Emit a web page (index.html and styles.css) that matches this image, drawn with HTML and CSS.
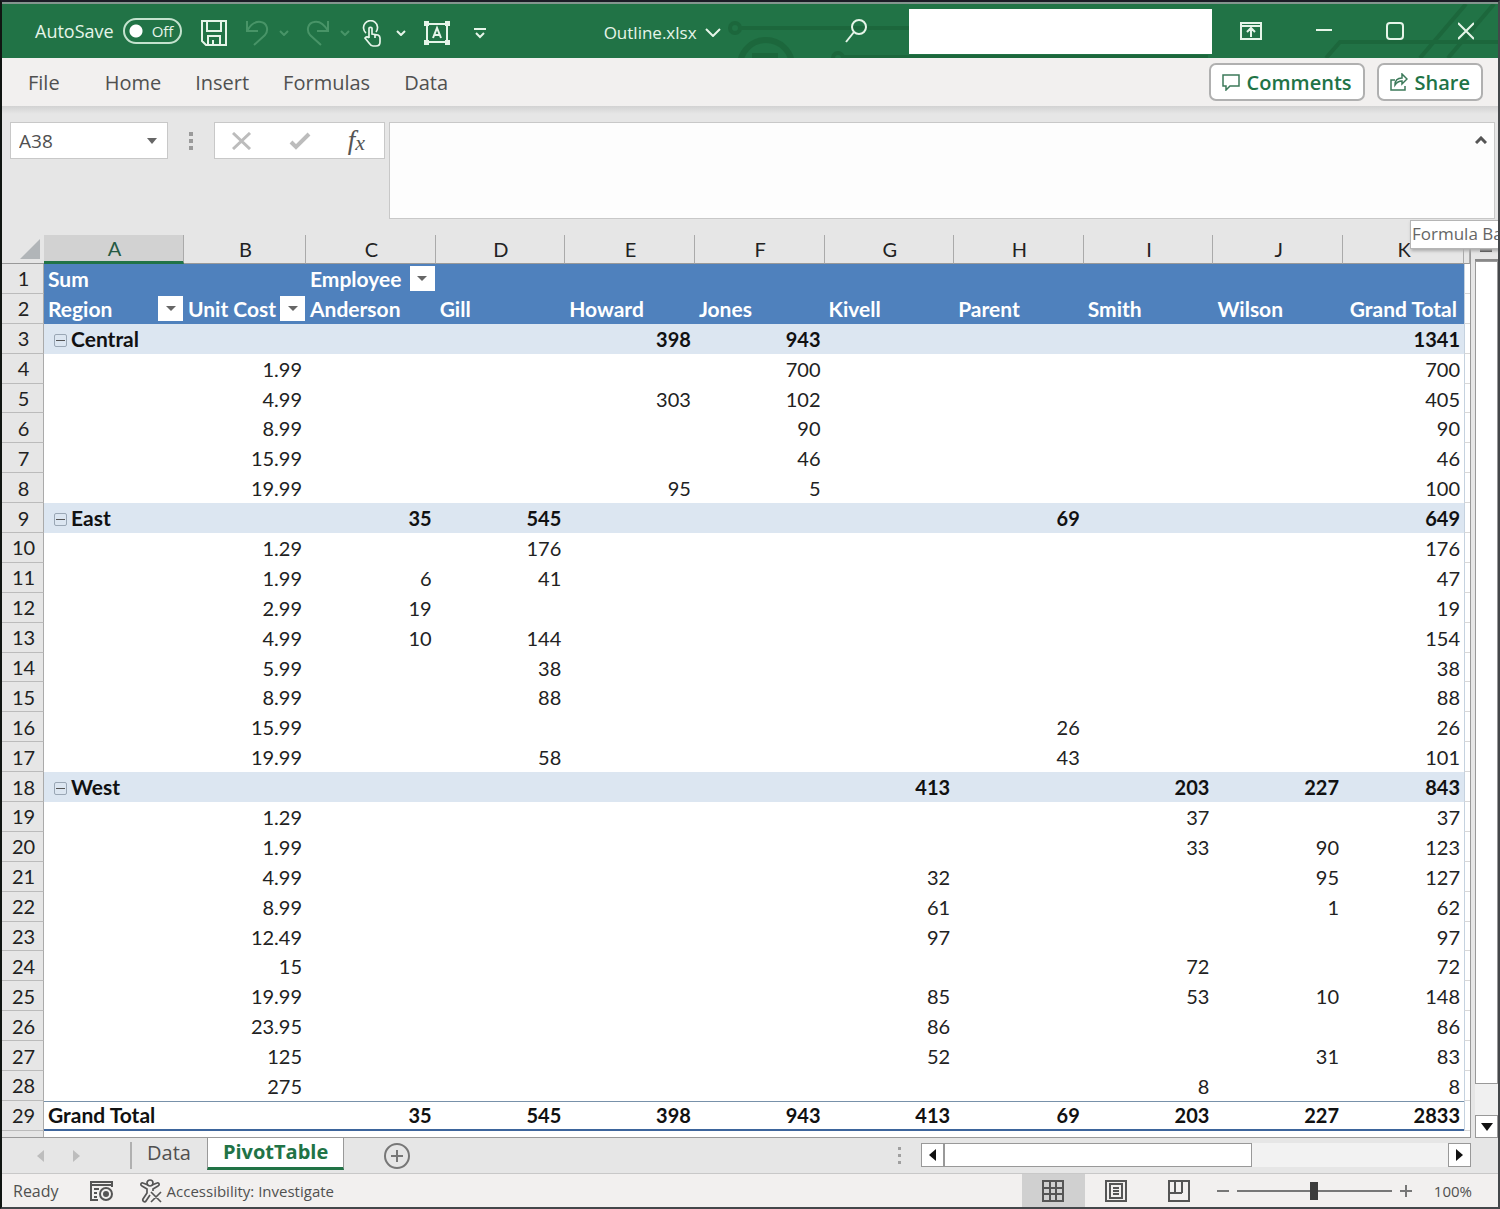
FILE: index.html
```html
<!DOCTYPE html>
<html lang="en">
<head>
<meta charset="utf-8">
<title>Outline.xlsx</title>
<link rel="stylesheet" href="styles.css">
</head>
<body>
<div class="window">
  <header class="titlebar">
    <svg class="circuit" width="770" height="54" viewBox="0 0 770 54" fill="none" stroke="#1b6238" stroke-width="4" aria-hidden="true">
      <circle cx="7" cy="24" r="5"/><path d="M13 24H480"/><circle cx="38" cy="62" r="26" stroke-width="6"/><path d="M24 52h26" stroke-width="6"/>
      <circle cx="110" cy="54" r="5"/><path d="M116 53H480M598 54l14-16h158M692 54l46-54M720 54l46-54"/>
    </svg>
    <label class="autosave">AutoSave
      <span class="switch"><input type="checkbox" role="switch"><span>Off</span></span>
    </label>
    <div class="quick">
      <button aria-label="Save"><svg width="26" height="26" viewBox="0 0 26 26" fill="none" stroke="#e6f5e9" stroke-width="2"><path d="M1 1h24v24H5l-4-4zM6 1v10h14V1M7 25v-9h12v9M12 25v-5"/></svg></button>
      <span class="pair faded">
        <button aria-label="Undo"><svg width="24" height="26" viewBox="0 0 24 26" fill="none" stroke="#5da67a" stroke-width="2"><path d="M2 1v10h11M2 11C6 4 11 1 16 2c6 1 8 8 4 13L9 25"/></svg></button>
        <button aria-label="Undo list"><svg width="10" height="6" viewBox="0 0 10 6" fill="none" stroke="#5da67a" stroke-width="2"><path d="M1 1l4 4 4-4"/></svg></button>
      </span>
      <span class="pair faded">
        <button aria-label="Redo"><svg width="24" height="26" viewBox="0 0 24 26" fill="none" stroke="#5da67a" stroke-width="2"><path d="M22 1v10H11M22 11C18 4 13 1 8 2c-6 1-8 8-4 13l11 10"/></svg></button>
        <button aria-label="Redo list"><svg width="10" height="6" viewBox="0 0 10 6" fill="none" stroke="#5da67a" stroke-width="2"><path d="M1 1l4 4 4-4"/></svg></button>
      </span>
      <span class="pair touch">
        <button aria-label="Touch mode"><svg width="20" height="27" viewBox="0 0 20 27" fill="none" stroke="#e6f5e9" stroke-width="2"><path d="M4 13a7 7 0 1 1 10-1" stroke-width="1.7"/><path d="M7 18V8a2 2 0 0 1 3 0v6l6 1q2 1 2 3v4q0 4-4 4h-3q-2 0-4-3l-4-5q2-2 4 0M13 14v4" stroke-width="1.7"/></svg></button>
        <button aria-label="Touch mode list"><svg width="10" height="6" viewBox="0 0 10 6" fill="none" stroke="#e6f5e9" stroke-width="2"><path d="M1 1l4 4 4-4"/></svg></button>
      </span>
      <button aria-label="Text box"><svg width="26" height="24" viewBox="0 0 26 24" fill="none" stroke="#e6f5e9" stroke-width="2"><path d="M3 3h20v18H3z"/><path d="M0 0h5v5H0zM21 0h5v5h-5zM0 19h5v5H0zM21 19h5v5h-5z" fill="#e6f5e9" stroke="none"/><path d="M9 17l4-10 4 10M10 14h6"/></svg></button>
      <button aria-label="Customize toolbar"><svg width="12" height="11" viewBox="0 0 12 11" fill="none" stroke="#e6f5e9" stroke-width="2"><path d="M0 1h12M2 5l4 4 4-4"/></svg></button>
    </div>
    <button class="file-name">Outline.xlsx <svg width="16" height="9" viewBox="0 0 16 9" fill="none" stroke="#e6f5e9" stroke-width="2"><path d="M1 1l7 7 7-7"/></svg></button>
    <button class="search" aria-label="Search"><svg width="22" height="24" viewBox="0 0 22 24" fill="none" stroke="#e6f5e9" stroke-width="2"><circle cx="14" cy="8" r="7"/><path d="M9 13L1 23"/></svg></button>
    <div class="account"></div>
    <div class="controls">
      <button aria-label="Ribbon options"><svg width="22" height="18" viewBox="0 0 22 18" fill="none" stroke="#e6f5e9" stroke-width="2"><path d="M1 1h20v16H1zM1 4h20M11 15V7M7 10l4-4 4 4"/></svg></button>
      <button aria-label="Minimize"><svg width="16" height="18" viewBox="0 0 16 18" stroke="#e6f5e9" stroke-width="2"><path d="M0 8h16"/></svg></button>
      <button aria-label="Maximize"><svg width="18" height="18" viewBox="0 0 18 18" fill="none" stroke="#e6f5e9" stroke-width="2"><rect x="1" y="1" width="16" height="16" rx="3"/></svg></button>
      <button aria-label="Close"><svg width="16" height="18" viewBox="0 0 16 18" stroke="#e6f5e9" stroke-width="2"><path d="M0 1l16 16M16 1L0 17"/></svg></button>
    </div>
  </header>

  <nav class="ribbon">
    <a href="#file">File</a><a href="#home">Home</a><a href="#insert">Insert</a><a href="#formulas">Formulas</a><a href="#data">Data</a>
    <button class="comments"><svg width="18" height="17" viewBox="0 0 18 17" fill="none" stroke="#3c7a5a" stroke-width="1.5"><path d="M1 1h16v11H8l-4 4v-4H1z"/></svg>Comments</button>
    <button><svg width="18" height="18" viewBox="0 0 18 18" fill="none" stroke="#3c7a5a" stroke-width="1.5"><path d="M5 7H1v10h14v-4M5 12c0-5 3-7 7-7V1l5 5-5 5V8c-3 0-5 1-7 4z"/></svg>Share</button>
  </nav>

  <section class="formula-area">
    <div class="name-box"><input type="text" value="A38" aria-label="Name box"><button aria-label="Names"><svg width="10" height="6"><path d="M0 0h10L5 6z" fill="#666"/></svg></button></div>
    <svg class="grip" width="4" height="18" fill="#9a9a9a"><path d="M0 0h4v4H0zM0 7h4v4H0zM0 14h4v4H0z"/></svg>
    <div class="fx-box">
      <button aria-label="Cancel"><svg width="20" height="18" viewBox="0 0 20 18" stroke="#bcbcbc" stroke-width="3"><path d="M1 1l17 16M18 1L1 17"/></svg></button>
      <button aria-label="Enter"><svg width="22" height="18" viewBox="0 0 22 18" fill="none" stroke="#bcbcbc" stroke-width="4"><path d="M2 10l5 5L20 2"/></svg></button>
      <button class="fx" aria-label="Insert function">f<small>x</small></button>
    </div>
    <div class="formula"><textarea aria-label="Formula bar"></textarea><button aria-label="Collapse formula bar"><svg width="12" height="8" viewBox="0 0 12 8" fill="none" stroke="#555" stroke-width="3"><path d="M1 7l5-5 5 5"/></svg></button>
      <div class="tooltip" role="tooltip">Formula Bar</div>
    </div>
  </section>

  <main class="workspace">
    <div class="sheet">
    <table>
      <colgroup><col class="c-row"><col class="c-a"><col class="c-b"><col><col><col><col><col><col><col><col><col class="c-k"><col class="c-rest"></colgroup>
      <thead><tr><th><svg class="corner" width="20" height="20"><path d="M20 0v20H0z" fill="#b1b5b8"/></svg></th><th class="selected">A</th><th>B</th><th>C</th><th>D</th><th>E</th><th>F</th><th>G</th><th>H</th><th>I</th><th>J</th><th>K</th><th></th></tr></thead>
      <tbody>
      <tr class="head"><th>1</th><td>Sum</td><td></td><td><span class="field">Employee<button aria-label="Filter Employee"></button></span></td><td></td><td></td><td></td><td></td><td></td><td></td><td></td><td></td><td></td></tr>
      <tr class="head"><th>2</th><td><span class="field">Region<button aria-label="Filter Region"></button></span></td><td><span class="field">Unit Cost<button aria-label="Filter Unit Cost"></button></span></td><td>Anderson</td><td>Gill</td><td>Howard</td><td>Jones</td><td>Kivell</td><td>Parent</td><td>Smith</td><td>Wilson</td><td>Grand Total</td><td></td></tr>
      <tr class="group"><th>3</th><td><button class="toggle" aria-label="Collapse"></button>Central</td><td></td><td></td><td></td><td>398</td><td>943</td><td></td><td></td><td></td><td></td><td>1341</td><td></td></tr>
      <tr><th>4</th><td></td><td>1.99</td><td></td><td></td><td></td><td>700</td><td></td><td></td><td></td><td></td><td>700</td><td></td></tr>
      <tr><th>5</th><td></td><td>4.99</td><td></td><td></td><td>303</td><td>102</td><td></td><td></td><td></td><td></td><td>405</td><td></td></tr>
      <tr><th>6</th><td></td><td>8.99</td><td></td><td></td><td></td><td>90</td><td></td><td></td><td></td><td></td><td>90</td><td></td></tr>
      <tr><th>7</th><td></td><td>15.99</td><td></td><td></td><td></td><td>46</td><td></td><td></td><td></td><td></td><td>46</td><td></td></tr>
      <tr><th>8</th><td></td><td>19.99</td><td></td><td></td><td>95</td><td>5</td><td></td><td></td><td></td><td></td><td>100</td><td></td></tr>
      <tr class="group"><th>9</th><td><button class="toggle" aria-label="Collapse"></button>East</td><td></td><td>35</td><td>545</td><td></td><td></td><td></td><td>69</td><td></td><td></td><td>649</td><td></td></tr>
      <tr><th>10</th><td></td><td>1.29</td><td></td><td>176</td><td></td><td></td><td></td><td></td><td></td><td></td><td>176</td><td></td></tr>
      <tr><th>11</th><td></td><td>1.99</td><td>6</td><td>41</td><td></td><td></td><td></td><td></td><td></td><td></td><td>47</td><td></td></tr>
      <tr><th>12</th><td></td><td>2.99</td><td>19</td><td></td><td></td><td></td><td></td><td></td><td></td><td></td><td>19</td><td></td></tr>
      <tr><th>13</th><td></td><td>4.99</td><td>10</td><td>144</td><td></td><td></td><td></td><td></td><td></td><td></td><td>154</td><td></td></tr>
      <tr><th>14</th><td></td><td>5.99</td><td></td><td>38</td><td></td><td></td><td></td><td></td><td></td><td></td><td>38</td><td></td></tr>
      <tr><th>15</th><td></td><td>8.99</td><td></td><td>88</td><td></td><td></td><td></td><td></td><td></td><td></td><td>88</td><td></td></tr>
      <tr><th>16</th><td></td><td>15.99</td><td></td><td></td><td></td><td></td><td></td><td>26</td><td></td><td></td><td>26</td><td></td></tr>
      <tr><th>17</th><td></td><td>19.99</td><td></td><td>58</td><td></td><td></td><td></td><td>43</td><td></td><td></td><td>101</td><td></td></tr>
      <tr class="group"><th>18</th><td><button class="toggle" aria-label="Collapse"></button>West</td><td></td><td></td><td></td><td></td><td></td><td>413</td><td></td><td>203</td><td>227</td><td>843</td><td></td></tr>
      <tr><th>19</th><td></td><td>1.29</td><td></td><td></td><td></td><td></td><td></td><td></td><td>37</td><td></td><td>37</td><td></td></tr>
      <tr><th>20</th><td></td><td>1.99</td><td></td><td></td><td></td><td></td><td></td><td></td><td>33</td><td>90</td><td>123</td><td></td></tr>
      <tr><th>21</th><td></td><td>4.99</td><td></td><td></td><td></td><td></td><td>32</td><td></td><td></td><td>95</td><td>127</td><td></td></tr>
      <tr><th>22</th><td></td><td>8.99</td><td></td><td></td><td></td><td></td><td>61</td><td></td><td></td><td>1</td><td>62</td><td></td></tr>
      <tr><th>23</th><td></td><td>12.49</td><td></td><td></td><td></td><td></td><td>97</td><td></td><td></td><td></td><td>97</td><td></td></tr>
      <tr><th>24</th><td></td><td>15</td><td></td><td></td><td></td><td></td><td></td><td></td><td>72</td><td></td><td>72</td><td></td></tr>
      <tr><th>25</th><td></td><td>19.99</td><td></td><td></td><td></td><td></td><td>85</td><td></td><td>53</td><td>10</td><td>148</td><td></td></tr>
      <tr><th>26</th><td></td><td>23.95</td><td></td><td></td><td></td><td></td><td>86</td><td></td><td></td><td></td><td>86</td><td></td></tr>
      <tr><th>27</th><td></td><td>125</td><td></td><td></td><td></td><td></td><td>52</td><td></td><td></td><td>31</td><td>83</td><td></td></tr>
      <tr><th>28</th><td></td><td>275</td><td></td><td></td><td></td><td></td><td></td><td></td><td>8</td><td></td><td>8</td><td></td></tr>
      <tr class="total"><th>29</th><td>Grand Total</td><td></td><td>35</td><td>545</td><td>398</td><td>943</td><td>413</td><td>69</td><td>203</td><td>227</td><td>2833</td><td></td></tr>
      </tbody>
    </table>
    </div>
    <div class="vscroll"><div class="vsplit"></div><div class="vthumb"></div><button aria-label="Scroll down"><svg width="12" height="8"><path d="M0 0h12L6 8z" fill="#111"/></svg></button></div>
  </main>

  <section class="tabs">
    <div class="arrows"><button aria-label="Previous sheet"><svg width="7" height="12"><path d="M7 0v12L0 6z" fill="#bdbdbd"/></svg></button><button aria-label="Next sheet"><svg width="7" height="12"><path d="M0 0v12l7-6z" fill="#bdbdbd"/></svg></button></div>
    <button class="tab">Data</button>
    <button class="tab active">PivotTable</button>
    <button class="add" aria-label="New sheet"><svg width="26" height="26" viewBox="0 0 26 26" fill="none" stroke="#777" stroke-width="2"><circle cx="13" cy="13" r="12"/><path d="M13 7v12M7 13h12"/></svg></button>
    <svg class="grip" width="4" height="18" fill="#a0a0a0"><path d="M0 0h3v3H0zM0 7h3v3H0zM0 14h3v3H0z"/></svg>
    <div class="hscroll"><button aria-label="Scroll left"><svg width="7" height="12"><path d="M7 0v12L0 6z" fill="#111"/></svg></button><div class="hthumb"></div><button class="right" aria-label="Scroll right"><svg width="7" height="12"><path d="M0 0v12l7-6z" fill="#111"/></svg></button></div>
  </section>

  <footer class="status">
    <span class="ready">Ready</span>
    <button class="macro" aria-label="Record macro"><svg width="24" height="22" viewBox="0 0 24 22" fill="none" stroke="#555" stroke-width="2"><path d="M8 20H1V2h21v5M1 5h21M4 9h5M4 13h3M4 17h3"/><circle cx="16" cy="14" r="6"/><circle cx="16" cy="14" r="2" fill="#555"/></svg></button>
    <button class="access"><svg width="22" height="24" viewBox="0 0 22 24" fill="none" stroke="#555" stroke-width="1.7"><circle cx="10" cy="4" r="3"/><path d="M8 6L3 4C1 3 0 6 2 7l5 3v4l-4 6c-1 2 2 4 3 2l4-6M12 6l5-2c2-1 3 2 1 3l-5 3v2M11 13l10 10M21 13L11 23"/></svg>Accessibility: Investigate</button>
    <div class="views">
      <button class="on" aria-label="Normal view"><svg width="22" height="22" viewBox="0 0 22 22" fill="none" stroke="#555" stroke-width="2"><path d="M1 1h20v20H1zM8 1v20M14 1v20M1 8h20M1 14h20"/></svg></button>
      <button aria-label="Page layout"><svg width="22" height="22" viewBox="0 0 22 22" fill="none" stroke="#555" stroke-width="2"><path d="M1 1h20v20H1zM5 4h12v14H5zM8 8h6M8 11h6M8 14h6"/></svg></button>
      <button aria-label="Page break preview"><svg width="22" height="22" viewBox="0 0 22 22" fill="none" stroke="#555" stroke-width="2"><path d="M1 1h20v20H1zM7 1v12M14 1v12M1 13h13"/></svg></button>
    </div>
    <div class="zoom">
      <button aria-label="Zoom out"><svg width="12" height="12" stroke="#777" stroke-width="2"><path d="M0 6h12"/></svg></button>
      <input type="range" min="0" max="200" value="100" aria-label="Zoom">
      <button aria-label="Zoom in"><svg width="12" height="12" stroke="#777" stroke-width="2"><path d="M0 6h12M6 0v12"/></svg></button>
      <span class="percent">100%</span>
    </div>
  </footer>
</div>
</body>
</html>
```
FILE: styles.css
```css
* { box-sizing: border-box; }
body { margin: 0; font-family: "Open Sans", "Noto Sans", sans-serif; color: #505050; }
button { padding: 0; border: 0; background: none; font: inherit; color: inherit; display: inline-flex; align-items: center; justify-content: center; }
svg { display: block; flex: none; }
.window { height: 100vh; min-height: 1120px; display: flex; flex-direction: column; overflow: hidden; background: #e6e6e6; border: 2px solid #44474a; border-top-color: #1b1b25; border-left-color: #101512; }

.titlebar { position: relative; height: 56px; flex: none; display: flex; align-items: center; background: #217346; border-top: 2px solid #84958f; color: #e6f5e9; padding: 0 24px 0 33px; }
.titlebar > * { position: relative; }
.titlebar > .circuit { position: absolute; right: 0; top: 0; opacity: .7; }
.autosave { display: flex; align-items: center; gap: 9px; font-size: 18px; }
.switch { display: grid; width: 59px; height: 26px; align-items: center; }
.switch > * { grid-area: 1 / 1; }
.switch input { appearance: none; margin: 0; width: 100%; height: 100%; border: 2px solid #c4e2ce; border-radius: 13px; background: radial-gradient(circle at 11px 11px, #fff 6px, transparent 7px); }
.switch span { padding-left: 29px; font-size: 15px; }
.quick { display: flex; align-items: center; gap: 18px; margin-left: 19px; padding-top: 4px; }
.pair { display: flex; align-items: center; gap: 10px; }
.faded + .faded { margin-left: -1px; }
.touch { gap: 14px; margin-left: -6px; }
.quick > :last-child { margin-left: 6px; }
.faded { opacity: .65; }
.file-name { margin-left: 118px; padding-top: 2px; gap: 8px; font-size: 17px; }
.search { margin-left: 124px; }
.account { flex: 0 1 303px; height: 45px; margin-left: 42px; background: #fff; }
.controls { margin-left: auto; display: flex; gap: 54px; }

.ribbon { flex: none; height: 48px; display: flex; align-items: center; gap: 34px; padding: 0 15px 0 26px; background: #f2f0ef; }
.ribbon a { color: #505050; text-decoration: none; font-size: 20px; }
.ribbon a:first-child { margin-right: 11px; }
.ribbon button { height: 38px; padding: 0 11px; gap: 7px; border: 2px solid #b0b0b0; border-radius: 7px; background: #fff; color: #217346; font-size: 20px; font-weight: 600; margin-left: -22px; }
.ribbon .comments { margin-left: auto; }

.formula-area { flex: none; height: 129px; display: flex; align-items: flex-start; padding: 16px 3px 0 8px; background: linear-gradient(#d2d2d2, #e6e6e6 8px); }
.name-box { display: flex; width: 158px; height: 37px; border: 1px solid #c8c8c8; background: #fff; padding-right: 10px; }
.name-box input { flex: 1; min-width: 0; border: 0; padding: 0 8px; font: 19px "Open Sans", sans-serif; color: #505050; background: none; }
.formula-area .grip { margin: 10px 21px 0; }
.fx-box { display: flex; align-items: center; justify-content: space-between; width: 171px; height: 37px; padding: 0 19px 0 17px; border: 1px solid #c8c8c8; background: #fff; }
.fx { font: italic 27px "Liberation Serif", serif; color: #555; }
.fx small { font-size: 22px; padding-top: 4px; }
.formula { position: relative; flex: 1; display: flex; align-items: flex-start; height: 97px; margin-left: 4px; border: 1px solid #c8c8c8; background: #fdfdfd; }
.formula textarea { flex: 1; height: 100%; border: 0; resize: none; background: none; }
.formula button { margin: 13px 7px; }
.tooltip { position: absolute; z-index: 2; left: calc(100% - 84px); top: 97px; width: 90px; height: 29px; padding-left: 1px; overflow: hidden; white-space: nowrap; font-size: 17px; line-height: 26px; color: #666; background: #fff; border: 1px solid #b5b5b5; box-shadow: 1px 2px 3px #aaa; }

.workspace { flex: 1; min-height: 0; display: flex; gap: 4px; }
.sheet { flex: 1; min-width: 0; background: linear-gradient(90deg, #e6e6e6 41px, #aaa 41px 42px, #fff 42px); padding-bottom: 6px; border-right: 1px solid #999; border-bottom: 1px solid #999; }
table { width: 100%; height: 100%; table-layout: fixed; border-collapse: separate; border-spacing: 0; font-family: Lato, "Noto Sans", sans-serif; font-size: 20px; line-height: 24px; color: #222; }
.c-row { width: 42px; } .c-a { width: 140px; } .c-b { width: 122px; } .c-k { width: 121px; } .c-rest { width: 6px; }
tr { height: 29px; }
th, td { padding: 0 4px; height: 29px; text-align: right; white-space: nowrap; }
td:nth-child(2) { text-align: left; font-size: 21px; }
th { padding: 0 0 0 2px; text-align: center; font-weight: 400; background: #e6e6e6; }
thead th { border-right: 1px solid #aaa; border-bottom: 1px solid #999; }
thead th:first-child { border-right: 0; }
thead .selected { background: #d2d2d2; color: #255a43; border-bottom: 3px solid #217346; }
.corner { margin-left: 16px; }
tbody th { border-right: 1px solid #aaa; border-bottom: 1px solid #bbb; }
td:last-child { border-left: 1px solid #c5d2df; border-bottom: 1px solid #d8d8d8; padding: 0; }
.head td:not(:last-child) { background: #4f81bd; color: #fff; font-size: 21px; font-weight: 700; text-align: left; }
.head td:nth-child(12) { text-align: right; padding-right: 7px; }
.group td:not(:last-child) { background: #dce6f1; }
.group td, .total td { color: #111; font-weight: 700; }
.total td:not(:last-child) { border-top: 1px solid #7891aa; border-bottom: 2px solid #3d659c; }
.field { display: flex; align-items: center; justify-content: space-between; margin-right: -3px; }
.field button { flex: none; width: 25px; height: 25px; margin: -1px 0; background: #fff; }
.field button::before { content: ""; border: 5px solid transparent; border-top-color: #666; border-bottom: 0; }
.toggle { width: 13px; height: 13px; margin: 0 4px 0 6px; border: 1px solid #9aa7b5; border-radius: 2px; vertical-align: 6px; }
.toggle::before { content: ""; width: 9px; height: 1px; background: #555; }
.vscroll { flex: none; width: 23px; display: flex; flex-direction: column; background: #f0f0f0; }
.vsplit { height: 26px; background: #e6e6e6; border-bottom: 2px solid #888; }
.vsplit::after { content: ""; display: block; width: 12px; height: 3px; margin: 14px 0 0 5px; background: #333; }
.vthumb { flex: 1; margin-bottom: 31px; background: #fff; border: 1px solid #999; }
.vscroll button, .hscroll button { flex: none; width: 23px; height: 23px; background: #fff; border: 1px solid #999; }

.tabs { flex: none; height: 36px; display: flex; align-items: flex-start; border-bottom: 1px solid #c8c8c8; }
.arrows { display: flex; width: 130px; height: 27px; margin-top: 4px; padding-left: 35px; gap: 29px; border-right: 2px solid #b0b0b0; }
.tab { height: 32px; padding: 0 16px 4px 15px; font-size: 20px; }
.tab.active { background: #fff; color: #217346; font-weight: 700; border: solid #999; border-width: 0 1px 3px; border-bottom-color: #217346; padding: 0 15px 2px; }
.add { margin: 5px 0 0 40px; }
.tabs .grip { margin: 9px 19px 0 auto; }
.hscroll { display: flex; flex: 0 1 550px; height: 24px; margin: 5px 27px 0 0; background: #f2f2f2; }
.hscroll button { height: 24px; }
.hthumb { flex: 0 1 308px; background: #fff; border: 1px solid #999; }
.hscroll .right { margin-left: auto; }

.status { flex: none; height: 33px; display: flex; align-items: center; padding: 0 26px 0 11px; background: #f2f0ef; font-size: 16px; }
.macro { margin-left: 31px; }
.access { margin-left: 26px; gap: 5px; font-size: 15px; }
.views { display: flex; align-self: stretch; margin-left: auto; }
.views button { width: 63px; }
.views .on { background: #d0d0d0; }
.zoom { display: flex; align-items: center; gap: 8px; margin-left: 6px; }
.zoom input { appearance: none; width: 155px; height: 18px; margin: 0; background: linear-gradient(#777, #777) center / 100% 2px no-repeat; }
.zoom input::-webkit-slider-thumb { appearance: none; width: 8px; height: 18px; background: #3c3c3c; }
.percent { margin-left: 14px; font-size: 15px; }
```
